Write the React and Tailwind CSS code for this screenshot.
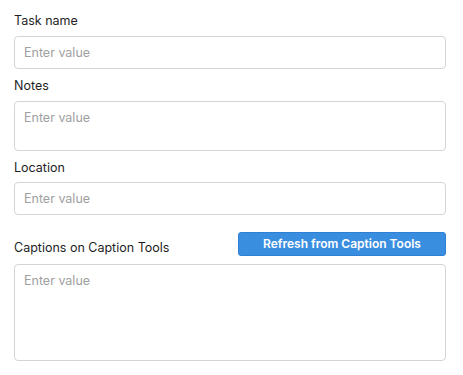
import React from 'react';

const Label = ({ children }) => (
    <label className="block text-[12.5px] leading-4 text-[#1e1e1e]">{children}</label>
);

const fieldCls =
    "block w-full rounded-[4px] border border-[#d4d4d4] bg-white px-[9px] text-[12.5px] text-[#222] placeholder:text-[#a0a0a0] outline-none";

const App = () => {
    return (
        <div className="min-h-screen bg-white px-[14px] pt-[13px] pr-[17px] font-['Inter',sans-serif]">
            {/* Task name */}
            <Label>Task name</Label>
            <input type="text" placeholder="Enter value" className={`${fieldCls} mt-[7px] h-[33px]`} />

            {/* Notes */}
            <div className="mt-[9px]">
                <Label>Notes</Label>
            </div>
            <textarea placeholder="Enter value" className={`${fieldCls} mt-[7px] h-[50px] resize-none py-[7px]`} />

            {/* Location */}
            <div className="mt-[9px]">
                <Label>Location</Label>
            </div>
            <input type="text" placeholder="Enter value" className={`${fieldCls} mt-[6px] h-[33px]`} />

            {/* Captions */}
            <div className="mt-[17px] flex items-end justify-between">
                <Label>Captions on Caption Tools</Label>
                <button className="h-[24px] w-[208px] rounded-[3px] border border-[#2f7fd4] bg-[#3a8ee0] text-[12px] font-semibold text-white">
                    Refresh from Caption Tools
                </button>
            </div>
            <textarea placeholder="Enter value" className={`${fieldCls} mt-[8px] h-[97px] resize-none py-[7px]`} />
        </div>
    );
};

export default App;
